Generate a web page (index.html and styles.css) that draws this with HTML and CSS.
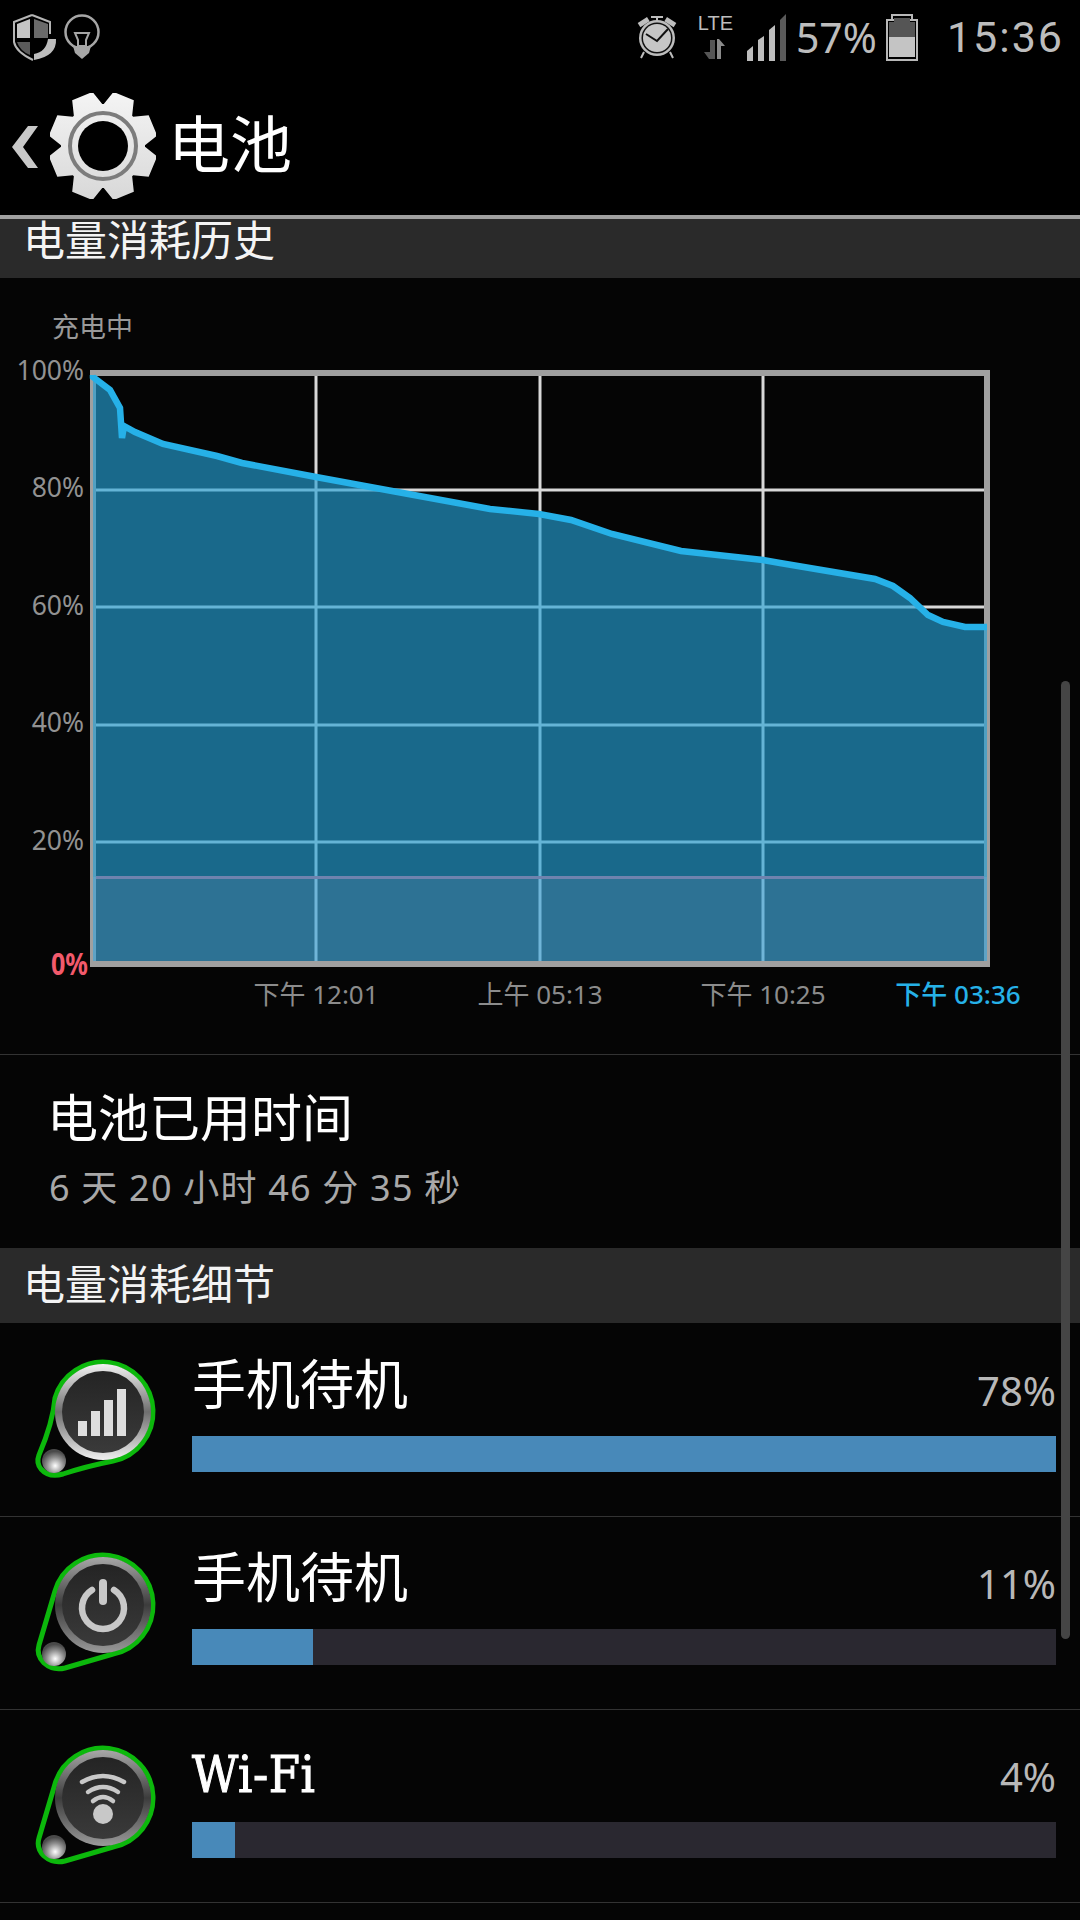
FILE: index.html
```html
<!DOCTYPE html>
<html lang="zh-CN">
<head>
    <meta charset="UTF-8">
    <meta name="viewport" content="width=device-width, initial-scale=1.0">
    <title>电池</title>
    <link rel="stylesheet" href="styles.css">
</head>
<body>
    <!-- shared gradients and the green badges behind the list icons -->
    <svg class="defs" width="0" height="0">
        <defs>
            <linearGradient id="gearShade" x1="0" y1="0" x2="0" y2="1">
                <stop offset="0" stop-color="#f4f4f4"/>
                <stop offset="1" stop-color="#d8d8d8"/>
            </linearGradient>
            <linearGradient id="ringBright" x1="0" y1="0" x2="0" y2="1">
                <stop offset="0" stop-color="#f2f2f2"/>
                <stop offset="0.5" stop-color="#6e6e6e"/>
                <stop offset="1" stop-color="#f0f0f0"/>
            </linearGradient>
            <linearGradient id="ringDull" x1="0" y1="0" x2="0" y2="1">
                <stop offset="0" stop-color="#a8a8a8"/>
                <stop offset="0.5" stop-color="#3c3c3c"/>
                <stop offset="1" stop-color="#9a9a9a"/>
            </linearGradient>
            <linearGradient id="discShade" x1="0" y1="0" x2="0" y2="1">
                <stop offset="0" stop-color="#242424"/>
                <stop offset="1" stop-color="#3a3a3a"/>
            </linearGradient>
            <radialGradient id="knobShade" cx="0.55" cy="0.7" r="0.6">
                <stop offset="0" stop-color="#ffffff"/>
                <stop offset="0.6" stop-color="#8c8c8c"/>
                <stop offset="1" stop-color="#4a4a4a"/>
            </radialGradient>
            <polygon id="tooth" points="-11,-54 11,-54 18,-30 -18,-30"/>
            <clipPath id="gearClip">
                <use href="#tooth" transform="translate(53 53) rotate(22.5)"/>
                <use href="#tooth" transform="translate(53 53) rotate(67.5)"/>
                <use href="#tooth" transform="translate(53 53) rotate(112.5)"/>
                <use href="#tooth" transform="translate(53 53) rotate(157.5)"/>
                <use href="#tooth" transform="translate(53 53) rotate(202.5)"/>
                <use href="#tooth" transform="translate(53 53) rotate(247.5)"/>
                <use href="#tooth" transform="translate(53 53) rotate(292.5)"/>
                <use href="#tooth" transform="translate(53 53) rotate(337.5)"/>
                <circle cx="53" cy="53" r="42"/>
            </clipPath>
            <path id="badge" d="M22,42 A50,50 0 1 1 80,105 L32,119 Q20,122 11,114 Q3,106 6,96 Z" fill="#050505" stroke="#0cb80c" stroke-width="5"/>
            <path id="badgeCurved" d="M22,42 A50,50 0 1 1 80,105 C60,109 45,113 30,118 Q16,122 8,113 Q3,107 6,99 C12,85 20,65 22,42 Z" fill="#050505" stroke="#0cb80c" stroke-width="5"/>
            <circle id="knob" cx="21" cy="105" r="12" fill="url(#knobShade)"/>
        </defs>
    </svg>

    <div class="status-bar">
        <div class="status-left">
            <svg class="ic-shield" width="44" height="47" viewBox="0 0 44 47">
                <path d="M19,1 L1,8 V28 Q3,38 20,46" fill="none" stroke="#b5b5b5" stroke-width="2"/>
                <path d="M19,1 L37,8 V20" fill="none" stroke="#b5b5b5" stroke-width="2"/>
                <polygon points="4,10 17,5 17,24 4,24" fill="#c4c4c4"/>
                <polygon points="21,5 35,10 35,24 21,24" fill="#6a6a6a"/>
                <path d="M4,28 H17 V41 Q7,37 4,28 Z" fill="#5a5a5a"/>
                <path d="M35,25 H43 Q44,42 21,46 V40 Q33,38 35,25 Z" fill="#bdbdbd"/>
            </svg>
            <svg class="ic-bulb" width="36" height="46" viewBox="0 0 36 46">
                <circle cx="18" cy="18" r="16.5" fill="none" stroke="#a6a6a6" stroke-width="2.5"/>
                <path d="M11,19 H25 L22,26 V32 H14 V26 Z" fill="none" stroke="#a6a6a6" stroke-width="2"/>
                <path d="M9,32 H27 L25,39 L18,45 L11,39 Z" fill="#a6a6a6"/>
            </svg>
        </div>
        <div class="status-right">
            <svg class="ic-alarm" width="40" height="45" viewBox="0 0 40 45">
                <rect x="14" y="2" width="12" height="2" fill="#bdbdbd"/>
                <rect x="19" y="2" width="2" height="6" fill="#bdbdbd"/>
                <rect x="1" y="6" width="11" height="5" transform="rotate(-32 6 8)" fill="#bdbdbd"/>
                <rect x="28" y="6" width="11" height="5" transform="rotate(32 34 8)" fill="#bdbdbd"/>
                <path d="M7,38 L4,44 M33,38 L36,44" stroke="#bdbdbd" stroke-width="2"/>
                <circle cx="20" cy="24" r="18" fill="#bdbdbd"/>
                <circle cx="20" cy="24" r="15.5" fill="#111"/>
                <circle cx="20" cy="24" r="14" fill="#c6c6c6"/>
                <path d="M9,20 L20,27 L31,15" fill="none" stroke="#111" stroke-width="2"/>
            </svg>
            <div class="lte">
                <span class="lte-label">LTE</span>
                <svg width="22" height="20" viewBox="0 0 22 20">
                    <path d="M11,1 V20 H5 L0,13 H6 V1 Z" fill="#555"/>
                    <path d="M13,20 V0 H15 L21,7 H17 V20 Z" fill="#8a8a8a"/>
                </svg>
            </div>
            <svg class="ic-signal" width="39" height="47" viewBox="0 0 39 47">
                <polygon points="0,37 6,32 6,47 0,47" fill="#bdbdbd"/>
                <polygon points="11,26 17,22 17,47 11,47" fill="#bdbdbd"/>
                <polygon points="22,16 28,11 28,47 22,47" fill="#bdbdbd"/>
                <polygon points="33,6 39,0 39,47 33,47" fill="#5a5a5a"/>
            </svg>
            <span class="status-pct">57%</span>
            <svg class="ic-battery" width="32" height="47" viewBox="0 0 32 47">
                <path d="M6,5 V1 H26 V5" fill="none" stroke="#b8b8b8" stroke-width="2"/>
                <rect x="1" y="6" width="30" height="40" fill="none" stroke="#b8b8b8" stroke-width="2"/>
                <rect x="3" y="8" width="26" height="15" fill="#555"/>
                <rect x="8" y="4" width="16" height="4" fill="#555"/>
                <rect x="3" y="23" width="26" height="20" fill="#c4c4c4"/>
            </svg>
            <span class="status-time">15:36</span>
        </div>
    </div>

    <div class="action-bar">
        <svg class="ic-back" width="28" height="44" viewBox="0 0 28 44">
            <polygon points="27,1 17,1 1,22 17,43 27,43 12,22" fill="#c8c8c8"/>
        </svg>
        <svg class="ic-gear" width="106" height="106" viewBox="0 0 106 106">
            <rect width="106" height="106" fill="url(#gearShade)" clip-path="url(#gearClip)"/>
            <circle cx="53" cy="53" r="33" fill="none" stroke="#7c7c7c" stroke-width="4"/>
            <circle cx="53" cy="53" r="25" fill="#000"/>
        </svg>
        <span class="action-title">电池</span>
    </div>

    <div class="section-head section-head-cut">电量消耗历史</div>

    <svg class="chart" width="1080" height="776" viewBox="0 278 1080 776">
        <text class="chart-state" x="52" y="337">充电中</text>

        <text class="y-label" x="84" y="380">100%</text>
        <text class="y-label" x="84" y="497">80%</text>
        <text class="y-label" x="84" y="615">60%</text>
        <text class="y-label" x="84" y="732">40%</text>
        <text class="y-label" x="84" y="850">20%</text>
        <text class="y-label-zero" x="51" y="975" textLength="37" lengthAdjust="spacingAndGlyphs">0%</text>

        <!-- grid -->
        <g class="grid">
            <path d="M96,490 H984 M96,607 H984 M96,725 H984 M96,842 H984"/>
            <path d="M316,376 V961 M540,376 V961 M763,376 V961"/>
        </g>
        <rect class="frame" x="93" y="373" width="894" height="591"/>

        <!-- level under the curve -->
        <polygon class="area" points="93,377 110,390 120,408 122,438 124,426 135,432 163,444 217,456 242,463 316,477 392,491 490,509 539,514 571,520 612,534 681,551 763,560 780,563 875,579 893,586 910,598 928,615 943,622 965,627 987,627 987,961 93,961"/>
        <rect class="low-zone" x="93" y="877" width="894" height="84"/>
        <path class="low-line" d="M96,877.5 H984"/>
        <path class="frame-bottom" d="M91,964 H990"/>
        <polyline class="curve" points="93,375 93,377 110,390 120,408 122,438 124,426 135,432 163,444 217,456 242,463 316,477 392,491 490,509 539,514 571,520 612,534 681,551 763,560 780,563 875,579 893,586 910,598 928,615 943,622 965,627 987,627"/>

        <text class="x-label" x="316" y="1004">下午 12:01</text>
        <text class="x-label" x="540" y="1004">上午 05:13</text>
        <text class="x-label" x="763" y="1004">下午 10:25</text>
        <text class="x-label x-label-now" x="958" y="1004">下午 03:36</text>
    </svg>

    <div class="usage-time">
        <div class="usage-title">电池已用时间</div>
        <div class="usage-value">6 天 20 小时 46 分 35 秒</div>
    </div>

    <div class="section-head">电量消耗细节</div>

    <div class="app-list">
        <div class="app-row">
            <svg class="app-icon" width="130" height="130" viewBox="0 0 130 130">
                <use href="#badgeCurved"/>
                <circle cx="70" cy="56" r="48" fill="url(#ringBright)"/>
                <circle cx="70" cy="56" r="41" fill="url(#discShade)"/>
                <use href="#knob"/>
                <g fill="#dedede">
                    <rect x="45" y="65" width="9" height="15"/>
                    <rect x="58" y="55" width="9" height="25"/>
                    <rect x="71" y="44" width="9" height="36"/>
                    <rect x="84" y="33" width="9" height="47"/>
                </g>
            </svg>
            <div class="app-body">
                <div class="app-top">
                    <span class="app-name">手机待机</span>
                    <span class="app-pct">78%</span>
                </div>
                <div class="bar"><div class="bar-fill" style="width: 100%"></div></div>
            </div>
        </div>

        <div class="app-row">
            <svg class="app-icon" width="130" height="130" viewBox="0 0 130 130">
                <use href="#badge"/>
                <circle cx="70" cy="56" r="48" fill="url(#ringDull)"/>
                <circle cx="70" cy="56" r="41" fill="url(#discShade)"/>
                <use href="#knob"/>
                <path d="M59,41 A21,21 0 1 0 81,41" fill="none" stroke="#c8c8c8" stroke-width="6.5" stroke-linecap="round"/>
                <path d="M70,34 V52" fill="none" stroke="#c8c8c8" stroke-width="8" stroke-linecap="round"/>
            </svg>
            <div class="app-body">
                <div class="app-top">
                    <span class="app-name">手机待机</span>
                    <span class="app-pct">11%</span>
                </div>
                <div class="bar"><div class="bar-fill" style="width: 14%"></div></div>
            </div>
        </div>

        <div class="app-row">
            <svg class="app-icon" width="130" height="130" viewBox="0 0 130 130">
                <use href="#badge"/>
                <circle cx="70" cy="56" r="48" fill="url(#ringDull)"/>
                <circle cx="70" cy="56" r="41" fill="url(#discShade)"/>
                <use href="#knob"/>
                <g fill="none" stroke="#c8c8c8" stroke-width="4.5" stroke-linecap="round">
                    <path d="M49,40 Q70,28 91,40"/>
                    <path d="M55,50 Q70,40 85,50"/>
                    <path d="M60,59 Q70,51 80,59"/>
                </g>
                <circle cx="70" cy="72" r="10" fill="#c8c8c8"/>
            </svg>
            <div class="app-body">
                <div class="app-top">
                    <span class="app-name app-name-latin">Wi-Fi</span>
                    <span class="app-pct">4%</span>
                </div>
                <div class="bar"><div class="bar-fill" style="width: 5%"></div></div>
            </div>
        </div>
    </div>

    <div class="scrollbar"></div>
</body>
</html>
```

FILE: styles.css
```css
body {
    margin: 0;
    width: 1080px;
    height: 1920px;
    overflow: hidden;
    position: relative;
    background-color: #050505;
    font-family: "Noto Sans", "Noto Sans CJK SC", sans-serif;
    color: #fff;
}
.defs {
    position: absolute;
}
svg {
    display: block;
}

/* status bar */
.status-bar {
    height: 70px;
    background-color: #000;
    display: flex;
    justify-content: space-between;
}
.status-left {
    display: flex;
    align-items: flex-start;
    padding: 14px 0 0 13px;
}
.ic-bulb {
    margin-left: 7px;
}
.status-right {
    display: flex;
    align-items: flex-start;
    padding: 14px 16px 0 0;
}
.lte {
    margin-left: 20px;
    width: 37px;
    display: flex;
    flex-direction: column;
    align-items: center;
}
.lte-label {
    font-family: "Liberation Sans", sans-serif;
    font-size: 20px;
    line-height: 18px;
    color: #bdbdbd;
    margin-bottom: 7px;
}
.ic-signal {
    margin-left: 13px;
}
.status-pct {
    margin-left: 10px;
    font-size: 41px;
    line-height: 47px;
    color: #bdbdbd;
}
.ic-battery {
    margin-left: 9px;
}
.status-time {
    margin-left: 29px;
    font-family: Roboto, sans-serif;
    font-size: 43px;
    line-height: 47px;
    letter-spacing: 2px;
    color: #bdbdbd;
}

/* action bar */
.action-bar {
    height: 145px;
    background-color: #000;
    border-bottom: 4px solid #a0a0a0;
    display: flex;
    align-items: center;
}
.ic-back {
    margin: 9px 0 0 11px;
}
.ic-gear {
    margin: 7px 0 0 11px;
}
.action-title {
    margin: -4px 0 0 12px;
    font-size: 62px;
}

/* section headers */
.section-head {
    height: 75px;
    line-height: 71px;
    background-color: #2a2a2a;
    padding-left: 23px;
    font-size: 42px;
    color: #f4f4f4;
}
.section-head-cut {
    height: 59px;
    line-height: 42px;
}

/* chart */
.chart {
    background-color: #050505;
}
.chart-state {
    font-size: 27px;
    fill: #999;
}
.y-label {
    font-size: 26.5px;
    fill: #929292;
    text-anchor: end;
}
.y-label-zero {
    font-size: 31px;
    font-weight: bold;
    fill: #f25a6c;
}
.grid path {
    fill: none;
    stroke: #d8d8d8;
    stroke-width: 3;
}
.frame {
    fill: none;
    stroke: #a0a0a0;
    stroke-width: 6;
}
.frame-bottom {
    fill: none;
    stroke: #a0a0a0;
    stroke-width: 6;
}
.area {
    fill: rgba(37, 161, 213, 0.647);
}
.low-zone {
    fill: rgba(226, 196, 240, 0.1);
}
.low-line {
    fill: none;
    stroke: #6f83ae;
    stroke-width: 3;
}
.curve {
    fill: none;
    stroke: #26b1e8;
    stroke-width: 6.5;
}
.x-label {
    font-size: 26px;
    fill: #8c8c8c;
    text-anchor: middle;
}
.x-label-now {
    fill: #26b1e8;
    font-weight: 500;
}

/* elapsed time */
.usage-time {
    height: 194px;
    box-sizing: border-box;
    border-top: 1px solid #333;
    padding: 30px 0 0 47px;
}
.usage-title {
    font-size: 51px;
    line-height: 64px;
}
.usage-value {
    margin: 14px 0 0 2px;
    font-size: 36px;
    line-height: 50px;
    letter-spacing: 1.2px;
    color: #a8a8a8;
}

/* app rows */
.app-list {
    padding-top: 1px;
}
.app-row {
    height: 193px;
    box-sizing: border-box;
    border-bottom: 1px solid #333;
    display: flex;
    padding-right: 24px;
}
.app-icon {
    margin: 32px 0 0 33px;
}
.app-body {
    margin-left: 29px;
    flex: 1;
    padding-top: 22px;
}
.app-top {
    height: 90px;
    display: flex;
    justify-content: space-between;
    align-items: flex-start;
}
.app-name {
    font-size: 54px;
    line-height: 76px;
}
.app-name-latin {
    font-family: "DejaVu Serif", serif;
    font-size: 50px;
    line-height: 86px;
    font-stretch: condensed;
    letter-spacing: 0.6px;
    -webkit-text-stroke: 1px #fff;
}
.app-pct {
    font-size: 40px;
    line-height: 90px;
    color: #b8b8b8;
}
.bar {
    height: 36px;
    background-color: #2a2830;
}
.bar-fill {
    height: 100%;
    background-color: #4889b9;
}

/* overlay scrollbar */
.scrollbar {
    position: absolute;
    left: 1061px;
    top: 681px;
    width: 9px;
    height: 958px;
    border-radius: 5px;
    background-color: #454545;
}
```
